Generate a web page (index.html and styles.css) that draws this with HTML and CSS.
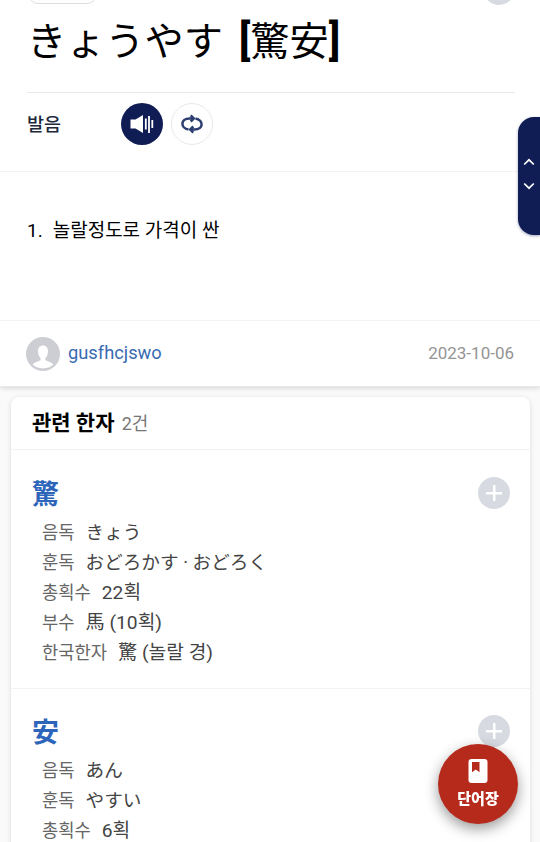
FILE: index.html
```html
<!DOCTYPE html>
<html lang="ko">
<head>
  <meta charset="UTF-8" />
  <meta name="viewport" content="width=device-width, initial-scale=1.0" />
  <title>きょうやす [驚安]</title>
  <link rel="stylesheet" href="styles.css">
</head>
<body>
  <main class="page">
    <section class="entry">
      <div class="entry-top">
        <span class="chip"></span>
        <span class="top-btn"></span>
      </div>
      <h1 class="word"><span lang="ja">きょうやす</span> <span class="hanja" lang="ja"><b>[</b>驚安<b>]</b></span></h1>
      <div class="pron">
        <span class="pron-label">발음</span>
        <button class="round play" aria-label="발음 듣기">
          <svg width="26" height="22" viewBox="0 0 26 22">
            <path d="M1.500 6.500h5l7.500-4.500v18l-7.500-4.500h-5z" fill="#fff"/>
            <path d="M16.800 5.500v11M20 3v17M23.300 7v8" stroke="#fff" stroke-width="1.800"/>
          </svg>
        </button>
        <button class="round repeat" aria-label="반복 듣기">
          <svg width="22" height="20" viewBox="0 0 22 20" fill="none" stroke="#2c3e70" stroke-width="2.500">
            <path d="M7.500 15.600C-.8 14-.8 4.400 8.500 4.400h3.500M14.500 4.400c8.300 1.600 8.300 11.200-1 11.200H10"/>
            <path d="M9.700 1.300l3.100 3.100-3.100 3.100M12.300 12.500l-3.100 3.100 3.100 3.100"/>
          </svg>
        </button>
      </div>
      <div class="meaning"><span class="num">1.</span>놀랄정도로 가격이 싼</div>
      <div class="author">
        <svg class="avatar" width="34" height="34" viewBox="0 0 34 34">
          <circle cx="17" cy="17" r="17" fill="#cdced3"/>
          <path d="M17 8.600c-3.200 0-5 2.300-5 5.600 0 3.400 1.300 5.500 2.600 6.800v2.300c-2.500 1.200-6.200 1.700-8 4.300A16 16 0 0 0 27.400 27.600c-1.800-2.600-5.500-3.100-8-4.300V21c1.300-1.300 2.600-3.400 2.600-6.800 0-3.300-1.800-5.600-5-5.600z" fill="#fff"/>
        </svg>
        <a class="user">gusfhcjswo</a>
        <time class="date">2023-10-06</time>
      </div>
    </section>

    <section class="related">
      <h2 class="related-title">관련 한자 <span class="count">2건</span></h2>
      <article class="kanji">
        <div class="kanji-head">
          <a class="char" lang="ja">驚</a>
          <button class="add" aria-label="추가"></button>
        </div>
        <dl class="info">
          <div><dt>음독</dt><dd lang="ja">きょう</dd></div>
          <div><dt>훈독</dt><dd lang="ja">おどろかす · おどろく</dd></div>
          <div><dt>총획수</dt><dd>22획</dd></div>
          <div><dt>부수</dt><dd>馬 (10획)</dd></div>
          <div><dt>한국한자</dt><dd>驚 (놀랄 경)</dd></div>
        </dl>
      </article>
      <article class="kanji">
        <div class="kanji-head">
          <a class="char" lang="ja">安</a>
          <button class="add" aria-label="추가"></button>
        </div>
        <dl class="info">
          <div><dt>음독</dt><dd lang="ja">あん</dd></div>
          <div><dt>훈독</dt><dd lang="ja">やすい</dd></div>
          <div><dt>총획수</dt><dd>6획</dd></div>
        </dl>
      </article>
    </section>
  </main>

  <nav class="side-nav">
    <svg width="12" height="8" viewBox="0 0 12 8"><path d="M1.200 6.500L6 1.800l4.800 4.700"/></svg>
    <svg width="12" height="8" viewBox="0 0 12 8"><path d="M1.200 1.500L6 6.200l4.800-4.700"/></svg>
  </nav>

  <button class="wordbook">
    <svg width="20" height="24" viewBox="0 0 20 24">
      <rect x=".5" width="19" height="24" rx="3" fill="#fff"/>
      <path d="M4 3h7.500v10.300l-3.750-2.800L4 13.300z" fill="#b52a1b"/>
    </svg>
    단어장
  </button>
</body>
</html>
```

FILE: styles.css
```css
:root {
  --navy: #101c54;
  --blue: #2c65b9;
  --line: #f3f3f4;
  --gray: #d7dae0;
}

* {
  box-sizing: border-box;
}

body {
  margin: 0;
  background: #fafafa;
  color: #000;
  font-family: Roboto, "Noto Sans CJK KR", sans-serif;
}

button {
  border: none;
  padding: 0;
  font-family: inherit;
}

[lang="ja"] {
  font-family: Roboto, "Noto Sans CJK JP", sans-serif;
}

.page {
  height: 842px;
  overflow: hidden;
}

.entry {
  display: flow-root;
  height: 387px;
  background: #fff;
  border-bottom: 1px solid #e9e9e9;
  box-shadow: 0 1px 5px rgba(0, 0, 0, 0.16);
}

.entry-top {
  display: flex;
  justify-content: space-between;
  align-items: flex-end;
  height: 32px;
  margin-top: -27px;
  padding: 0 25px 0 28px;
}

.chip {
  width: 69px;
  height: 30px;
  margin-bottom: 1px;
  border: 1px solid #dcdee2;
  border-radius: 10px;
}

.top-btn {
  width: 32px;
  height: 32px;
  border-radius: 50%;
  background: var(--gray);
}

.word {
  height: 88px;
  margin: 0 25px 0 27px;
  border-bottom: 1px solid #eaeaeb;
  font-size: 39.200px;
  font-weight: 400;
  line-height: 71px;
  white-space: nowrap;
}

.hanja {
  margin-left: 6px;
}

.hanja b {
  font-size: 42px;
}

.pron {
  display: flex;
  align-items: center;
  height: 79px;
  padding: 0 27px 16px;
  border-bottom: 1px solid var(--line);
}

.pron-label {
  width: 94px;
  padding-bottom: 2px;
  color: #20283c;
  font-size: 18.500px;
  font-weight: 500;
}

.round {
  display: flex;
  align-items: center;
  justify-content: center;
  width: 42px;
  height: 42px;
  margin-right: 7.500px;
  border-radius: 50%;
  background: #fff;
}

.round.play {
  background: var(--navy);
}

.round.repeat {
  border: 1px solid #e8e8ea;
}

.meaning {
  height: 148px;
  padding: 45px 27px 0;
  font-size: 19px;
  line-height: 28px;
}

.num {
  margin-right: 10px;
}

.author {
  display: flex;
  align-items: center;
  height: 66px;
  padding: 0 26px;
  border-top: 1px solid var(--line);
}

.user {
  margin-left: 8px;
  padding-bottom: 2px;
  color: #3a6bb2;
  font-size: 18.300px;
}

.date {
  margin-left: auto;
  padding-bottom: 2px;
  color: #949494;
  font-size: 17px;
}

.related {
  height: 600px;
  margin: 10px 10px 0 11px;
  border-radius: 8px;
  background: #fff;
  box-shadow: 0 1px 5px rgba(0, 0, 0, 0.13);
}

.related-title {
  height: 53px;
  margin: 0;
  padding-left: 21px;
  border-bottom: 1px solid var(--line);
  font-size: 21px;
  font-weight: 700;
  line-height: 52px;
}

.count {
  margin-left: 2px;
  color: #777;
  font-size: 18px;
  font-weight: 400;
}

.kanji {
  height: 239px;
  padding: 21px 20px 0 21px;
  border-bottom: 1px solid var(--line);
}

.kanji + .kanji {
  padding-top: 20px;
}

.kanji-head {
  display: flex;
  align-items: center;
  justify-content: space-between;
  height: 44px;
}

.char {
  padding-bottom: 2px;
  color: var(--blue);
  font-size: 27px;
  font-weight: 700;
}

.add {
  width: 32px;
  height: 32px;
  border-radius: 50%;
  background:
    linear-gradient(#fff, #fff) center / 16px 2.500px no-repeat,
    linear-gradient(#fff, #fff) center / 2.500px 16px no-repeat,
    var(--gray);
}

.info {
  margin: 1px 0 0 10px;
}

.info div {
  display: flex;
  align-items: center;
  height: 30px;
  white-space: nowrap;
}

.info dt {
  color: #666;
  font-size: 17.700px;
}

.info dd {
  margin: 0 0 0 11px;
  color: #444;
  font-size: 19.200px;
}

.info dd[lang="ja"] {
  padding-bottom: 2px;
  font-size: 18.600px;
}

.side-nav {
  position: fixed;
  top: 117px;
  right: 0;
  display: flex;
  flex-direction: column;
  align-items: center;
  justify-content: center;
  gap: 16px;
  width: 22px;
  height: 118px;
  padding-bottom: 4px;
  border-radius: 16px 0 0 16px;
  background: var(--navy);
  box-shadow: 0 1px 3px rgba(16, 28, 84, 0.4);
}

.side-nav path {
  fill: none;
  stroke: #fff;
  stroke-width: 1.7;
}

.wordbook {
  position: fixed;
  right: 22px;
  bottom: 18px;
  display: flex;
  flex-direction: column;
  align-items: center;
  width: 80px;
  height: 80px;
  padding-top: 15px;
  border-radius: 50%;
  background: #b52a1b;
  box-shadow: 0 5px 14px rgba(0, 0, 0, 0.4);
  color: #fff;
  font-size: 15px;
  font-weight: 900;
  line-height: 32px;
}
```
